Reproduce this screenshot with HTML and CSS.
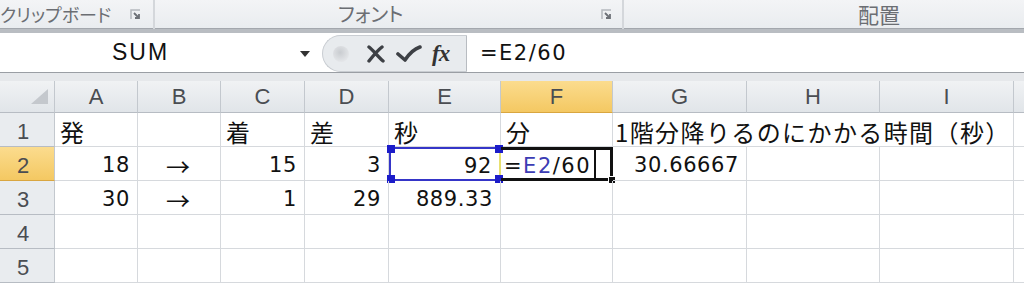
FILE: index.html
```html
<!DOCTYPE html>
<html lang="ja">
<head>
    <meta charset="UTF-8">
    <title>Excel</title>
    <link rel="stylesheet" href="styles.css">
</head>
<body>
    <!-- リボン下端のグループ名 -->
    <div class="ribbon">
        <div class="group g-clip">
            <span class="label">クリップボード</span>
            <svg class="launcher" width="12" height="12" viewBox="0 0 12 12"><path d="M1 10V1h9" fill="none" stroke="#b4b8bd" stroke-width="1.5"/><path d="M4 4l5 5M5 9h4V5" fill="none" stroke="#6d7177" stroke-width="1.8"/></svg>
        </div>
        <div class="group g-font">
            <span class="label">フォント</span>
            <svg class="launcher" width="12" height="12" viewBox="0 0 12 12"><path d="M1 10V1h9" fill="none" stroke="#b4b8bd" stroke-width="1.5"/><path d="M4 4l5 5M5 9h4V5" fill="none" stroke="#6d7177" stroke-width="1.8"/></svg>
        </div>
        <div class="group g-align">
            <span class="label">配置</span>
        </div>
    </div>

    <!-- 数式バー -->
    <div class="fbar">
        <div class="namebox">
            <span class="name">SUM</span>
            <svg class="drop" width="10" height="6" viewBox="0 0 10 6"><path d="M0 0h10L5 6z" fill="#333"/></svg>
        </div>
        <div class="fbtns">
            <span class="knob"></span>
            <svg width="20" height="18" viewBox="0 0 20 18"><path d="M3 2c4 3 9 10 14 14M16 2C12 5 7 11 3 16" fill="none" stroke="#3d4045" stroke-width="3.4" stroke-linecap="round"/></svg>
            <svg width="26" height="18" viewBox="0 0 26 18"><path d="M2 9l7 6C13 9 18 4 24 2" fill="none" stroke="#3d4045" stroke-width="3.6" stroke-linecap="round" stroke-linejoin="round"/></svg>
            <span class="fx">fx</span>
        </div>
        <div class="formula">=E2/60</div>
    </div>

    <!-- シート -->
    <div class="sheet">
        <div class="hd corner"><span class="tri"></span></div>
        <div class="hd">A</div>
        <div class="hd">B</div>
        <div class="hd">C</div>
        <div class="hd">D</div>
        <div class="hd">E</div>
        <div class="hd sel">F</div>
        <div class="hd">G</div>
        <div class="hd">H</div>
        <div class="hd">I</div>
        <div class="hd"></div>

        <div class="rh">1</div>
        <div class="c jp">発</div>
        <div class="c"></div>
        <div class="c jp">着</div>
        <div class="c jp">差</div>
        <div class="c jp">秒</div>
        <div class="c jp">分</div>
        <div class="c jp wide">1階分降りるのにかかる時間（秒）</div>
        <div class="c"></div>

        <div class="rh sel">2</div>
        <div class="c n">18</div>
        <div class="c jp mid">→</div>
        <div class="c n">15</div>
        <div class="c n">3</div>
        <div class="c n ref">92<span class="h tl"></span><span class="h tr"></span><span class="h bl"></span><span class="h br"></span></div>
        <div class="c n active"><span class="eq">=</span><span class="r">E2</span>/60<span class="caret"></span><span class="fill"></span></div>
        <div class="c n">30.66667</div>
        <div class="c"></div>
        <div class="c"></div>
        <div class="c"></div>

        <div class="rh">3</div>
        <div class="c n">30</div>
        <div class="c jp mid">→</div>
        <div class="c n">1</div>
        <div class="c n">29</div>
        <div class="c n">889.33</div>
        <div class="c"></div>
        <div class="c"></div>
        <div class="c"></div>
        <div class="c"></div>
        <div class="c"></div>

        <div class="rh">4</div>
        <div class="c"></div><div class="c"></div><div class="c"></div><div class="c"></div><div class="c"></div>
        <div class="c"></div><div class="c"></div><div class="c"></div><div class="c"></div><div class="c"></div>

        <div class="rh">5</div>
        <div class="c"></div><div class="c"></div><div class="c"></div><div class="c"></div><div class="c"></div>
        <div class="c"></div><div class="c"></div><div class="c"></div><div class="c"></div><div class="c"></div>
    </div>
</body>
</html>
```

FILE: styles.css
```css
*{
    margin: 0;
    padding: 0;
    box-sizing: border-box;
}
body{
    width: 1024px;
    height: 285px;
    overflow: hidden;
    background: #fff;
    font-family: "Liberation Sans", sans-serif;
}

/* リボン */
.ribbon{
    height: 33px;
    display: flex;
    background: linear-gradient(#f3f4f6, #e9ecef);
    border-bottom: 4px solid #b9bdc2;
    box-shadow: inset 0 -5px 0 -4px #a3a7ad;
}
.group{
    display: flex;
    align-items: flex-start;
    height: 29px;
    border-right: 2px solid #d4d7db;
    font: 20px/28px "Noto Sans CJK JP", sans-serif;
    font-feature-settings: "palt";
    color: #6b6e73;
    white-space: nowrap;
}
.label{
    flex-shrink: 0;
}
.launcher{
    flex-shrink: 0;
}
.g-clip{
    width: 155px;
}
.g-clip .label{
    font-size: 18px;
}
.g-clip .launcher{
    margin: 9px 11px 0 auto;
}
.g-font{
    width: 469px;
}
.g-font .label{
    margin-left: 183px;
}
.g-font .launcher{
    margin: 9px 0 0 198px;
}
.g-align{
    flex: 1;
    border-right: 0;
    padding-left: 234px;
    font-size: 21px;
}

/* 数式バー */
.fbar{
    height: 48px;
    display: flex;
    background: #fff;
    border-bottom: 8px solid #e6e8eb;
    box-shadow: 0 1px 0 #aeb2b8, inset 0 -9px 0 -8px #9a9ea4;
    padding-bottom: 1px;
}
.namebox{
    width: 322px;
    display: flex;
    align-items: center;
    padding-left: 112px;
}
.name{
    font-size: 23px;
    letter-spacing: 2px;
    color: #111;
}
.drop{
    margin-left: 131px;
    margin-top: 2px;
}
.fbtns{
    width: 145px;
    display: flex;
    align-items: center;
    background: #e8ebee;
    border: 1px solid #c9cdd2;
    border-right: 1px solid #b8bcc1;
    border-radius: 20px 0 0 20px;
    margin-top: 2px;
    padding-left: 10px;
}
.knob{
    width: 16px;
    height: 16px;
    border-radius: 50%;
    background: radial-gradient(circle at 45% 40%, #c9ccd0, #e3e5e8 70%);
    margin-right: 17px;
}
.fbtns svg{
    margin-right: 10px;
}
.fx{
    font: italic bold 23px "Liberation Serif", serif;
    color: #333;
    letter-spacing: -1px;
}
.formula{
    flex: 1;
    display: flex;
    align-items: center;
    padding-left: 13px;
    font: 21px "DejaVu Sans", sans-serif;
    letter-spacing: 1.5px;
    color: #111;
}

/* シート */
.sheet{
    display: grid;
    grid-template-columns: 55px 83px 83px 84px 84px 112px 112px 134px 133px 134px 1fr;
    grid-template-rows: 32px repeat(5, 34px);
    background: #fff;
}
.hd, .rh{
    display: flex;
    align-items: center;
    justify-content: center;
    background: linear-gradient(#f0f2f4, #e1e5e9);
    border-right: 1px solid #c3c8ce;
    border-bottom: 1px solid #b7bcc3;
    font: 22px "Liberation Sans", sans-serif;
    color: #4a4d52;
}
.rh{
    padding: 4px 8px 0 0;
    background: #e9ecef;
}
.hd.sel, .rh.sel{
    background: linear-gradient(#fbdc8e, #f4c862);
    border-bottom-color: #d9a640;
}
.corner{
    justify-content: flex-end;
    padding-right: 6px;
}
.tri{
    width: 0;
    height: 0;
    border-left: 17px solid transparent;
    border-bottom: 15px solid #c4c8cd;
}

.c{
    position: relative;
    display: flex;
    align-items: center;
    padding: 3px 7px 0 6px;
    border-right: 1px solid #d6d9dd;
    border-bottom: 1px solid #d6d9dd;
    color: #111;
    white-space: nowrap;
}
.jp{
    font: 24px "Noto Sans CJK JP", sans-serif;
    padding-left: 5px;
}
.mid{
    justify-content: center;
}
.n{
    justify-content: flex-end;
    font: 21px "DejaVu Sans", sans-serif;
    letter-spacing: 0.6px;
}
.wide{
    grid-column: span 3;
    padding-left: 2px;
    letter-spacing: 1.4px;
}

/* 参照セル E2 */
.ref{
    border: 2px solid #3535c8;
    border-right: 2px solid #e8e070;
    padding-right: 7px;
}
.h{
    position: absolute;
    width: 8px;
    height: 8px;
    background: #1c1cc9;
}
.tl{ left: -4px; top: -4px; }
.bl{ left: -4px; bottom: -4px; }
.tr{ right: -4px; top: -4px; }
.br{ right: -4px; bottom: -4px; }

/* 編集中セル F2 */
.active{
    justify-content: flex-start;
    padding-left: 3px;
    border-top: 3px solid #111;
    border-bottom: 3px solid #111;
    border-right: 3px solid #111;
    letter-spacing: 1.5px;
}
.active .r{
    color: #3c3cb4;
}
.caret{
    position: absolute;
    left: 93px;
    top: 0;
    bottom: 0;
    width: 2px;
    background: #111;
}
.fill{
    position: absolute;
    right: -6px;
    bottom: -6px;
    width: 8px;
    height: 8px;
    background: #111;
    border: 1px solid #fff;
}
```
